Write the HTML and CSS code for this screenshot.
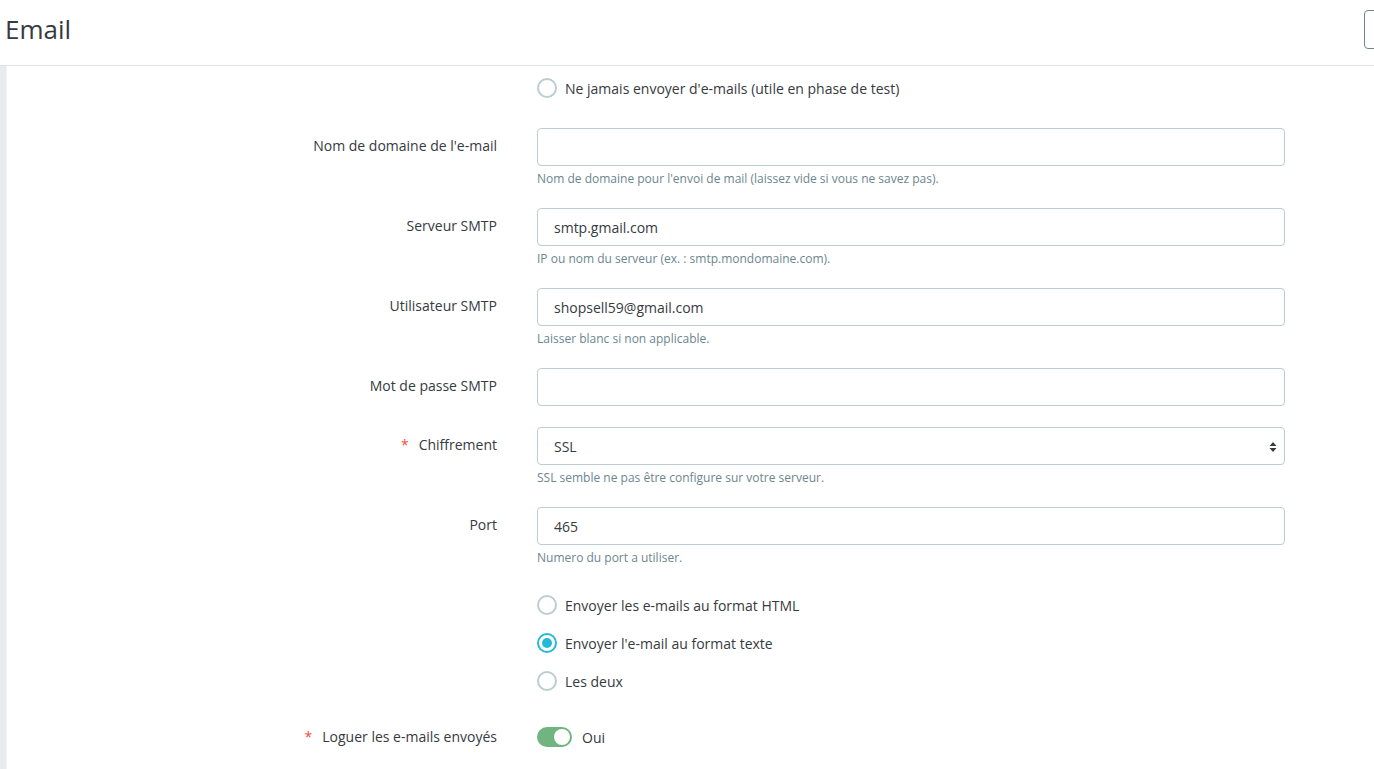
FILE: index.html
```html
<!DOCTYPE html>
<html lang="fr">
<head>
<meta charset="UTF-8" />
<meta name="viewport" content="width=device-width, initial-scale=1" />
<title>Email</title>
<link rel="stylesheet" href="styles.css">
</head>
<body>

<header class="page-head">
  <h1>Email</h1>
  <button class="btn-outline" type="button"></button>
</header>

<div class="page">
  <div class="side-strip"></div>

  <form class="form">
    <!-- envoi des mails -->
    <div class="row">
      <div class="label"></div>
      <div class="field radios">
        <label class="radio"><span class="dot"></span>Ne jamais envoyer d'e-mails (utile en phase de test)</label>
      </div>
    </div>

    <div class="row">
      <label class="label">Nom de domaine de l'e-mail</label>
      <div class="field">
        <input class="input" type="text" value="">
        <div class="help">Nom de domaine pour l'envoi de mail (laissez vide si vous ne savez pas).</div>
      </div>
    </div>

    <div class="row">
      <label class="label">Serveur SMTP</label>
      <div class="field">
        <input class="input" type="text" value="smtp.gmail.com">
        <div class="help">IP ou nom du serveur (ex. : smtp.mondomaine.com).</div>
      </div>
    </div>

    <div class="row">
      <label class="label">Utilisateur SMTP</label>
      <div class="field">
        <input class="input" type="text" value="shopsell59@gmail.com">
        <div class="help">Laisser blanc si non applicable.</div>
      </div>
    </div>

    <div class="row">
      <label class="label">Mot de passe SMTP</label>
      <div class="field">
        <input class="input" type="password" value="">
      </div>
    </div>

    <div class="row">
      <label class="label"><span class="req">*</span>Chiffrement</label>
      <div class="field">
        <div class="select">
          <span>SSL</span>
          <svg class="select-arrow" width="8" height="12" viewBox="0 0 8 12"><path d="M4 1 L7.5 5 H0.5 Z M4 11 L0.5 7 H7.5 Z" fill="#363a41"/></svg>
        </div>
        <div class="help">SSL semble ne pas être configure sur votre serveur.</div>
      </div>
    </div>

    <div class="row">
      <label class="label">Port</label>
      <div class="field">
        <input class="input" type="text" value="465">
        <div class="help">Numero du port a utiliser.</div>
      </div>
    </div>

    <div class="row row-format">
      <div class="label"></div>
      <div class="field radios">
        <label class="radio"><span class="dot"></span>Envoyer les e-mails au format HTML</label>
        <label class="radio"><span class="dot checked"></span>Envoyer l'e-mail au format texte</label>
        <label class="radio"><span class="dot"></span>Les deux</label>
      </div>
    </div>

    <div class="row">
      <label class="label label-short"><span class="req">*</span>Loguer les e-mails envoyés</label>
      <div class="field toggle-field">
        <span class="switch"><span class="knob"></span></span>
        <span>Oui</span>
      </div>
    </div>
  </form>
</div>

</body>
</html>
```

FILE: styles.css
```css
body {
  margin: 0;
  font-family: "Open Sans", "Noto Sans", sans-serif;
  font-size: 14px;
  color: #363a41;
  background: #fff;
  overflow: hidden;
}
.page-head {
  display: flex;
  align-items: flex-start;
  height: 65px;
  border-bottom: 1px solid #dde2e4;
  overflow: hidden;
}
.page-head h1 {
  flex: 1;
  margin: 0;
  padding: 13px 0 0 5px;
  font-size: 26px;
  font-weight: 400;
  line-height: 32px;
  color: #363a41;
}
.btn-outline {
  flex-shrink: 0;
  width: 100px;
  height: 39px;
  margin: 10px -90px 0 0;
  border: 1px solid #6c868e;
  border-radius: 4px;
  background: #fff;
}
.page {
  display: flex;
  min-height: 703px;
}
.side-strip {
  width: 6px;
  background: #e8ebed;
  border-right: 1px solid #f1f3f4;
}
.form {
  padding-top: 3px;
}
.row {
  display: grid;
  grid-template-columns: 490px 748px;
  column-gap: 40px;
  margin-bottom: 21px;
}
.row-format {
  margin-top: -1px;
}
.label {
  text-align: right;
  line-height: 36px;
}
.label-short {
  line-height: 32px;
}
.req {
  color: #f54c3e;
  margin-right: 10px;
}
.input, .select {
  box-sizing: border-box;
  width: 100%;
  height: 38px;
  padding: 0 16px;
  border: 1px solid #bbcdd2;
  border-radius: 4px;
  font-family: inherit;
  font-size: 14px;
  color: #363a41;
  background: #fff;
  outline: none;
}
.select {
  position: relative;
  display: flex;
  align-items: center;
}
.select-arrow {
  position: absolute;
  right: 7px;
  top: 13px;
}
.help {
  margin-top: 5px;
  font-size: 12px;
  line-height: 16px;
  color: #6c868e;
}
.radio {
  display: flex;
  align-items: center;
  height: 38px;
}
.dot {
  box-sizing: border-box;
  width: 20px;
  height: 20px;
  margin-right: 8px;
  border: 2px solid #bbcdd2;
  border-radius: 50%;
  position: relative;
}
.dot.checked {
  border-color: #25b9d7;
}
.dot.checked::after {
  content: "";
  position: absolute;
  left: 3px; top: 3px;
  width: 10px; height: 10px;
  border-radius: 50%;
  background: #25b9d7;
}
.toggle-field {
  display: flex;
  align-items: center;
  height: 32px;
}
.switch {
  display: flex;
  justify-content: flex-end;
  align-items: center;
  box-sizing: border-box;
  width: 35px;
  height: 20px;
  padding: 2px;
  margin-right: 10px;
  border-radius: 10px;
  background: #70b580;
}
.knob {
  width: 16px;
  height: 16px;
  border-radius: 50%;
  background: #fff;
}
```
